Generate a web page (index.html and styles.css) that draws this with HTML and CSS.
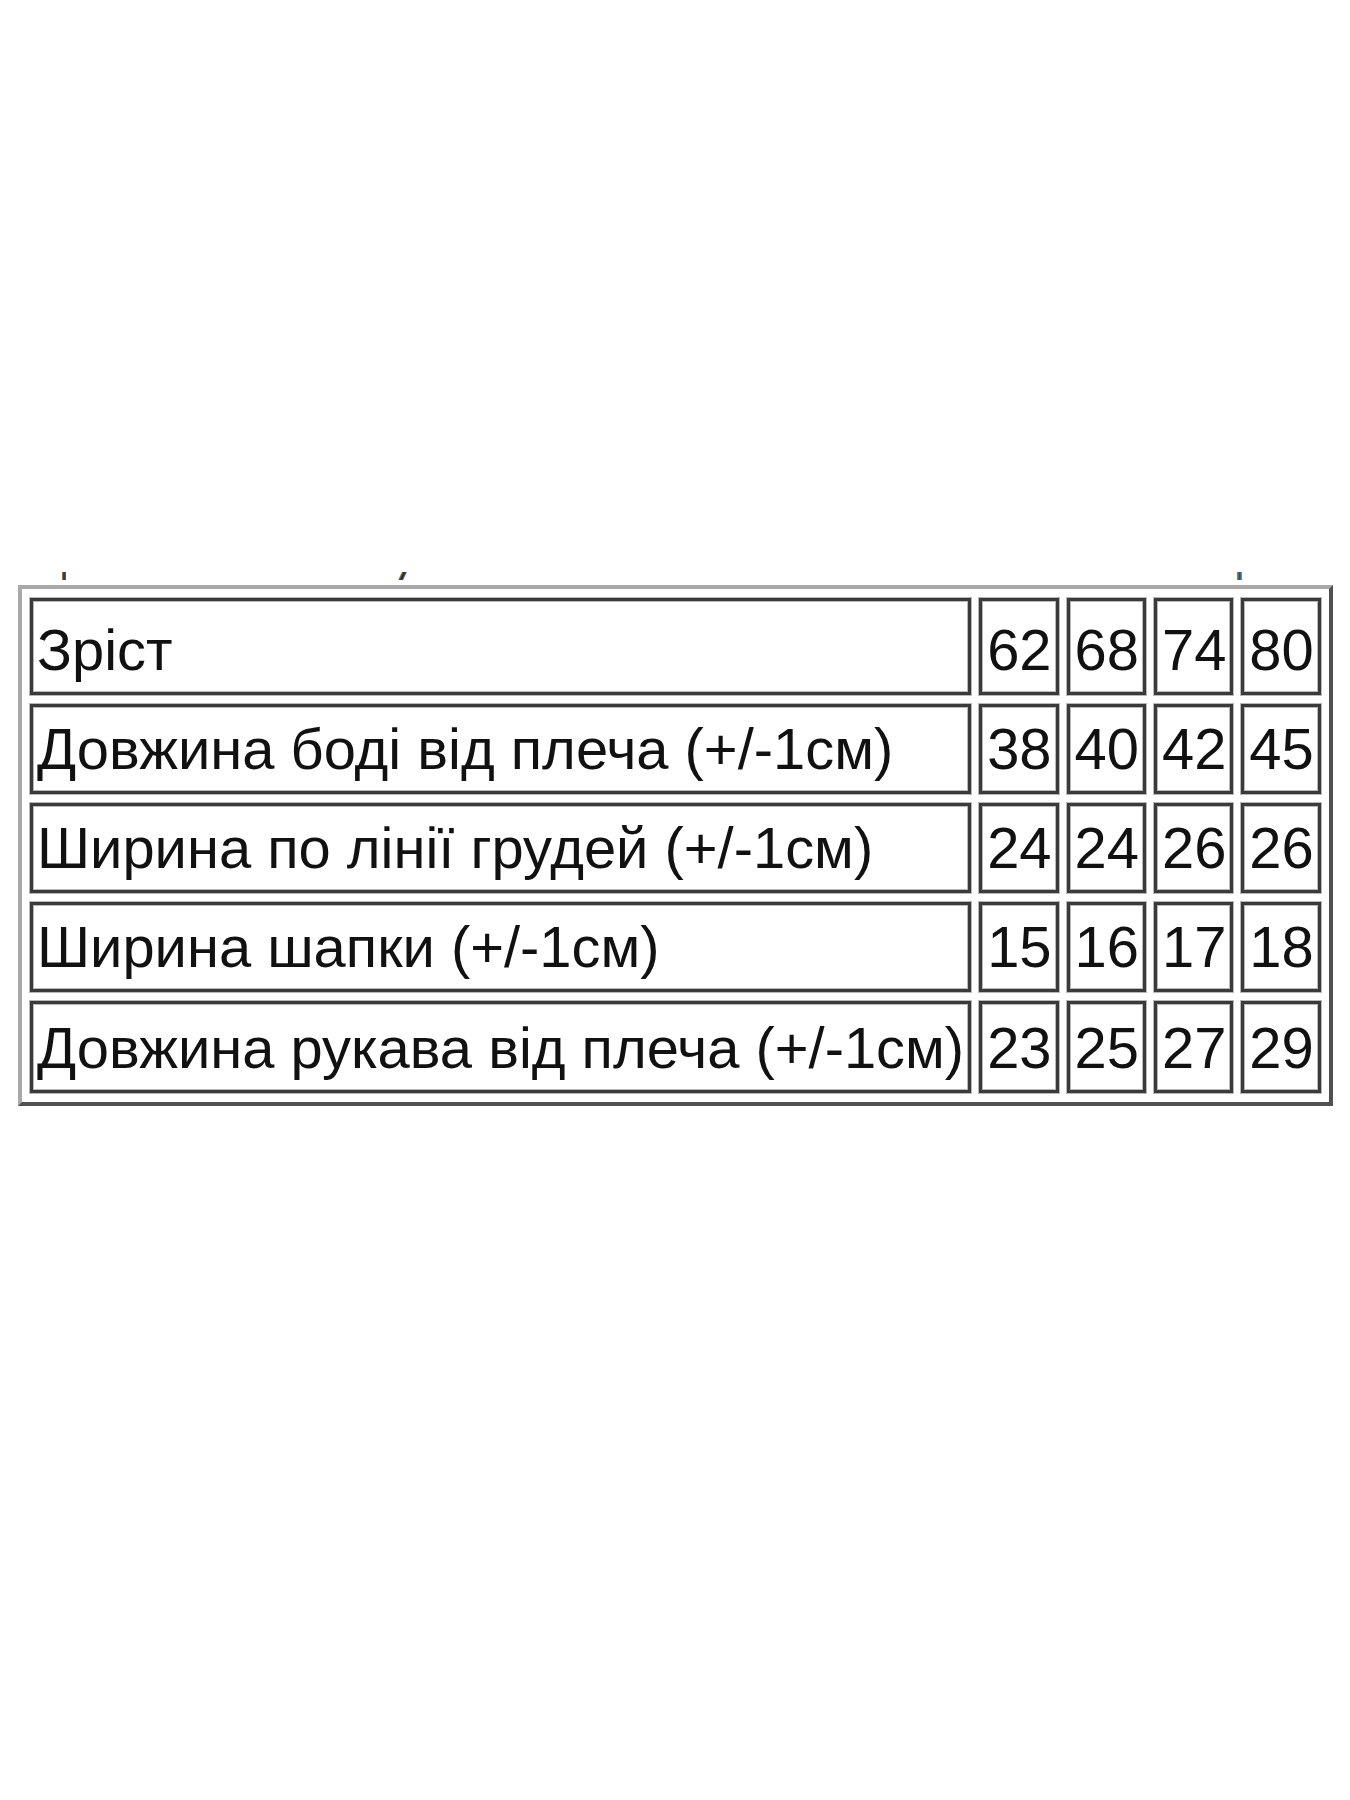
FILE: index.html
```html
<!DOCTYPE html>
<html lang="uk">
<head>
<meta charset="utf-8">
<title>Розмірна сітка</title>
<link rel="stylesheet" href="styles.css">
</head>
<body>
<div class="page">
  <div class="marks">
    <span class="mk m1"></span>
    <span class="mk m2"></span>
    <span class="mk m3"></span>
  </div>
  <table class="sizes">
    <tr class="r1">
      <td class="label">Зріст</td>
      <td class="num">62</td>
      <td class="num">68</td>
      <td class="num">74</td>
      <td class="num">80</td>
    </tr>
    <tr>
      <td class="label">Довжина боді від плеча (+/-1см)</td>
      <td class="num">38</td>
      <td class="num">40</td>
      <td class="num">42</td>
      <td class="num">45</td>
    </tr>
    <tr>
      <td class="label">Ширина по лінії грудей (+/-1см)</td>
      <td class="num">24</td>
      <td class="num">24</td>
      <td class="num">26</td>
      <td class="num">26</td>
    </tr>
    <tr>
      <td class="label">Ширина шапки (+/-1см)</td>
      <td class="num">15</td>
      <td class="num">16</td>
      <td class="num">17</td>
      <td class="num">18</td>
    </tr>
    <tr class="r5">
      <td class="label">Довжина рукава від плеча (+/-1см)</td>
      <td class="num">23</td>
      <td class="num">25</td>
      <td class="num">27</td>
      <td class="num">29</td>
    </tr>
  </table>
</div>
</body>
</html>
```

FILE: styles.css
```css
html, body {
  margin: 0;
  background: #ffffff;
}

body {
  font-family: "Liberation Sans", Arial, sans-serif;
}

.page {
  box-sizing: border-box;
  height: 1800px;
  padding: 572px 0 0 18px;
}

.marks {
  display: flex;
  align-items: flex-start;
  height: 8px;
  margin-bottom: 5px;
}

.mk {
  display: block;
  height: 8px;
  background: #4a3a2a;
}

.m1 {
  width: 4px;
  margin-left: 44px;
  background: linear-gradient(90deg, #c9822a, #2a2a2a 50%, #3f6fa8);
}

.m2 {
  width: 5px;
  margin-left: 334px;
  transform: skewX(-25deg);
  background: linear-gradient(90deg, #c9822a, #222 50%, #3a6ea8);
}

.m3 {
  width: 5px;
  margin-left: 832px;
  background: linear-gradient(90deg, #c9822a, #2a4f7a 50%, #3fa0d8);
}

.sizes {
  border-collapse: separate;
  border-spacing: 8px 9px;
  border-style: solid;
  border-width: 4px;
  border-color: #a9a9a9 #505050 #505050 #a9a9a9;
  font-size: 57.9px;
  color: #111111;
}

.sizes tr {
  height: 90px;
}

.sizes tr.r1 {
  height: 97px;
}

.sizes tr.r5 {
  height: 92px;
}

.sizes td {
  border: 3px solid #3a3a3a;
  box-shadow: 0 0 0 1px #b8b8b8, inset 0 0 0 1px #b8b8b8;
  padding: 0 4px 10px 4px;
  line-height: 64px;
  vertical-align: bottom;
  white-space: nowrap;
  text-align: left;
}

.sizes td.num {
  padding-left: 5px;
  padding-right: 4px;
}
```
